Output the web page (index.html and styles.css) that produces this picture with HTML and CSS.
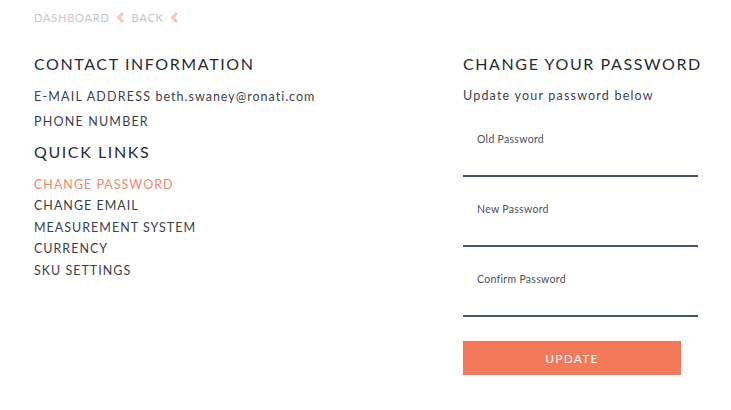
FILE: index.html
```html
<!DOCTYPE html>
<html>
<head>
<meta charset="utf-8">
<link rel="stylesheet" href="styles.css">
</head>
<body>
<div class="page">
  <nav class="crumbs">
    <span>DASHBOARD</span>
    <svg class="chev" width="9" height="11" viewBox="0 0 9 11"><polyline points="7,1 2.5,5.5 7,10" fill="none" stroke="#f6c6b9" stroke-width="3"/></svg>
    <span>BACK</span>
    <svg class="chev" width="9" height="11" viewBox="0 0 9 11"><polyline points="7,1 2.5,5.5 7,10" fill="none" stroke="#f6c6b9" stroke-width="3"/></svg>
  </nav>
  <div class="cols">
    <section class="left">
      <h2 class="title">CONTACT INFORMATION</h2>
      <div class="info">
        <div>E-MAIL ADDRESS <span class="val">beth.swaney@ronati.com</span></div>
        <div>PHONE NUMBER</div>
      </div>
      <h2 class="title ql">QUICK LINKS</h2>
      <ul class="links">
        <li class="active">CHANGE PASSWORD</li>
        <li>CHANGE EMAIL</li>
        <li>MEASUREMENT SYSTEM</li>
        <li>CURRENCY</li>
        <li>SKU SETTINGS</li>
      </ul>
    </section>
    <section class="right">
      <h2 class="title">CHANGE YOUR PASSWORD</h2>
      <p class="sub">Update your password below</p>
      <div class="field"><label>Old Password</label><div class="input"></div></div>
      <div class="field"><label>New Password</label><div class="input"></div></div>
      <div class="field"><label>Confirm Password</label><div class="input"></div></div>
      <button class="btn">UPDATE</button>
    </section>
  </div>
</div>
</body>
</html>
```
FILE: styles.css
```css
* { box-sizing: border-box; }
body { margin: 0; background: #fff; font-family: Lato, "Noto Sans", sans-serif; color: #3a3f4c; }
.page { padding: 9px 0 0 34px; }
.crumbs { display: flex; align-items: center; height: 16px; font-size: 11px; letter-spacing: 0.8px; color: #c3c6cd; }
.chev { margin: 0 7px 0 6px; }
.cols { display: grid; grid-template-columns: 429px 260px; margin-top: 29px; }
.title { margin: 0; font-weight: 400; font-size: 16px; line-height: 20px; letter-spacing: 1.6px; color: #262b36; white-space: nowrap; }
.info { margin-top: 10px; font-size: 12.5px; line-height: 25px; letter-spacing: 1.2px; }
.val { letter-spacing: 1px; }
.ql { margin-top: 8px; }
.links { list-style: none; margin: 12px 0 0; padding: 0; font-size: 12.5px; line-height: 21.4px; letter-spacing: 1px; }
.links .active { color: #f6876d; }
.right { width: 235px; }
.sub { margin: 13px 0 0; font-size: 12.5px; line-height: 18px; letter-spacing: 1.2px; }
.field { margin-top: 25px; }
.sub + .field { margin-top: 27px; }
.field label { display: block; padding-left: 14px; font-size: 10.5px; line-height: 14px; letter-spacing: 0.3px; color: #4a4f5c; }
.input { height: 31px; border-bottom: 2px solid #46546f; }
.btn { display: block; margin-top: 24px; width: 218px; height: 34px; border: 0; background: #f4795a; color: #fff; font-family: inherit; font-size: 12px; letter-spacing: 1.2px; }
```
